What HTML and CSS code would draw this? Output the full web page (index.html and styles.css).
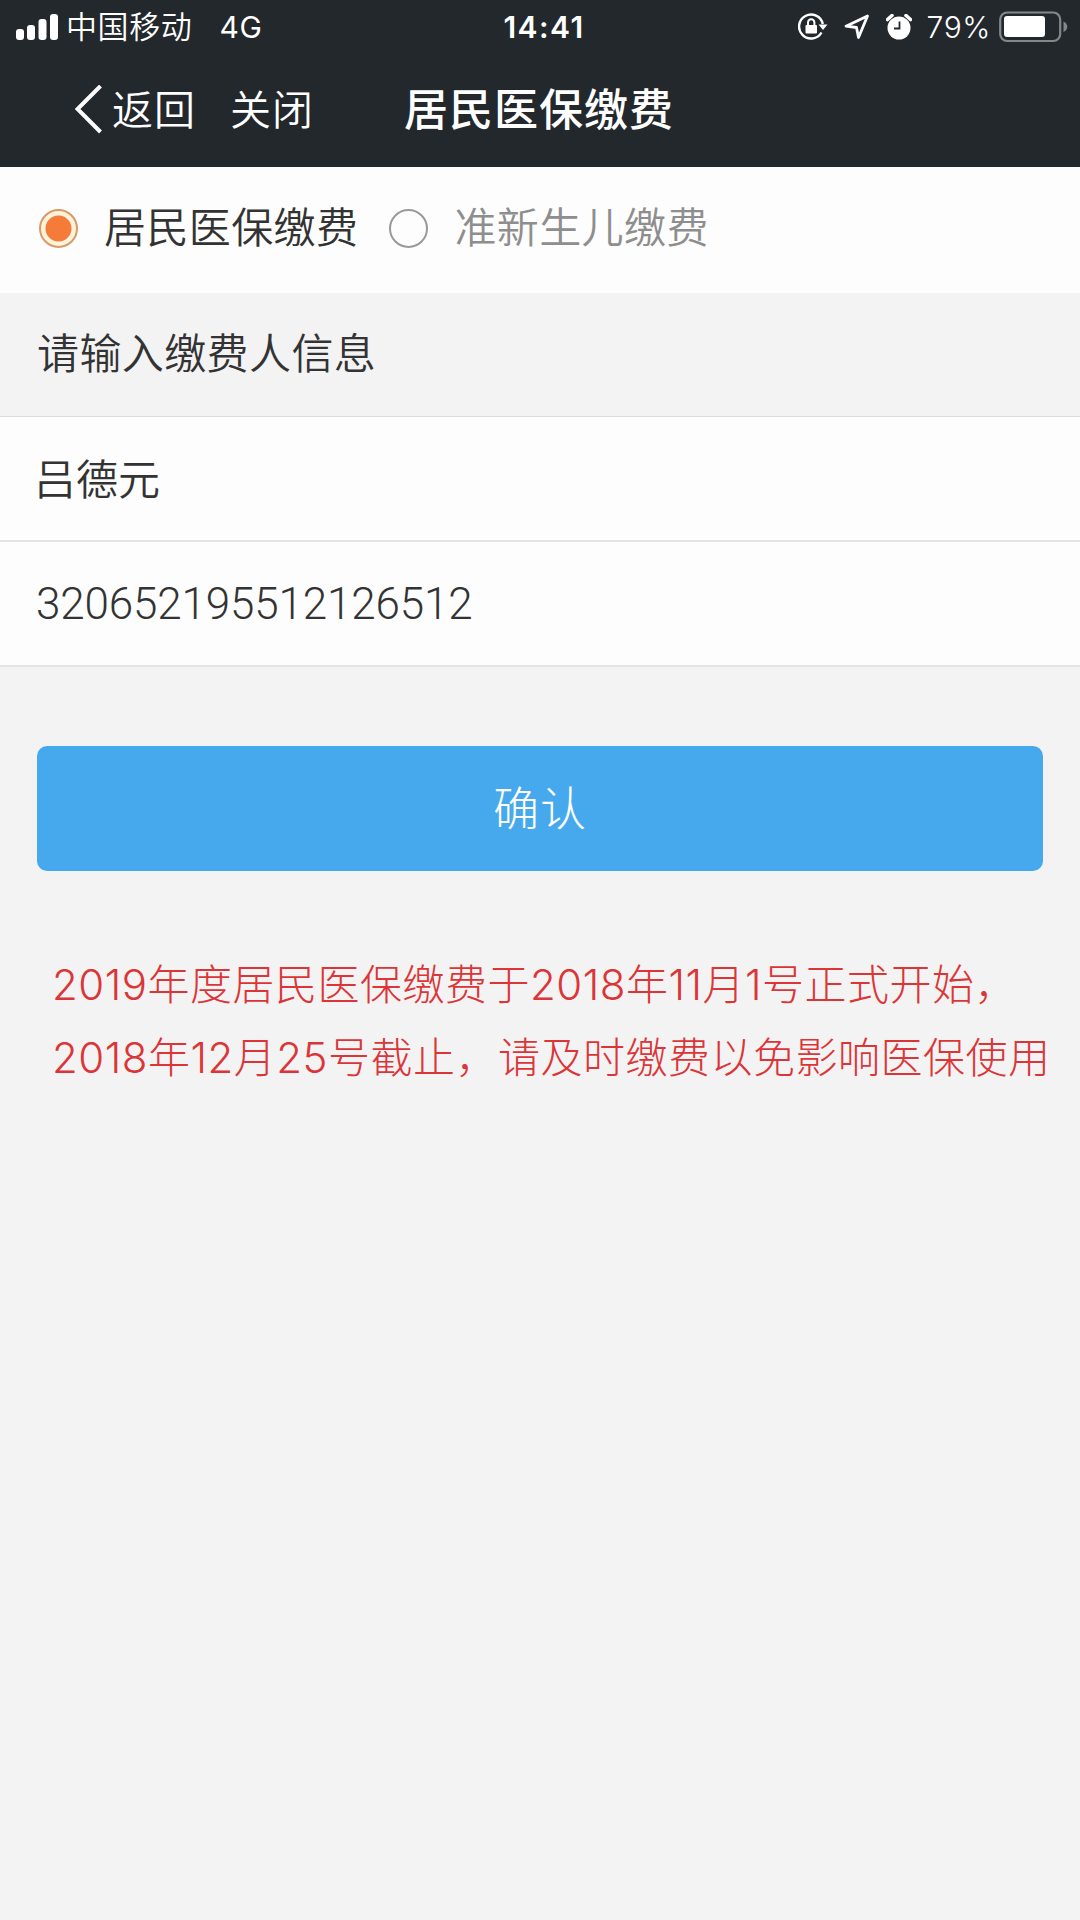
FILE: index.html
```
<!DOCTYPE html>
<html lang="zh-CN">
<head>
  <meta charset="UTF-8">
  <meta name="viewport" content="width=device-width, initial-scale=1.0">
  <title>居民医保缴费</title>
  <link rel="stylesheet" href="styles.css">
</head>
<body>
  <header class="header">
    <div class="status-bar">
      <div class="status-left">
        <svg class="signal" width="42" height="26" viewBox="0 0 42 26" fill="#fff">
          <rect x="0" y="15" width="8" height="11" rx="3"/>
          <rect x="11" y="11" width="8" height="15" rx="3"/>
          <rect x="22.500" y="5" width="8" height="21" rx="3"/>
          <rect x="34" y="0" width="8" height="26" rx="3"/>
        </svg>
        <span class="carrier">中国移动</span>
        <span class="network">4G</span>
      </div>
      <div class="clock">14:41</div>
      <div class="status-right">
        <svg class="lock" width="30" height="28" viewBox="0 0 30 28">
          <path d="M23.500 19.500A12 12 0 1 1 24.800 11" fill="none" stroke="#fff" stroke-width="2.400"/>
          <path d="M20.500 11.500h9L25 17z" fill="#fff"/>
          <rect x="7.500" y="12" width="11.500" height="8.500" rx="1" fill="#fff"/>
          <path d="M10 12V9.500a3.200 3.200 0 0 1 6.400 0V12" fill="none" stroke="#fff" stroke-width="2"/>
        </svg>
        <svg class="location" width="26" height="26" viewBox="0 0 26 26">
          <path d="M23.500 2L2 12.200l10.500 1.300L14.500 23.500z" fill="none" stroke="#fff" stroke-width="2.800" stroke-linejoin="round"/>
        </svg>
        <svg class="alarm" width="26" height="26" viewBox="0 0 26 26">
          <circle cx="13" cy="14" r="11.500" fill="#fff"/>
          <path d="M1.500 5.500L6 1.500M24.500 5.500L20 1.500" stroke="#fff" stroke-width="3.600" stroke-linecap="round"/>
          <path d="M13.500 7.500v7H8" fill="none" stroke="#23282c" stroke-width="1.800"/>
        </svg>
        <span class="percent">79%</span>
        <svg class="battery" width="69" height="32" viewBox="0 0 69 32">
          <rect x="1.200" y="1.500" width="60" height="28.500" rx="7" fill="none" stroke="#84888b" stroke-width="2.200"/>
          <rect x="5" y="5" width="41" height="21" rx="3" fill="#fff"/>
          <path d="M64.500 10.500c5 2 5 8.500 0 10.500z" fill="#84888b"/>
        </svg>
      </div>
    </div>
    <nav class="nav-bar">
      <a class="back">
        <svg width="28" height="50" viewBox="0 0 28 50">
          <path d="M25.500 1L2.500 24l23 23" fill="none" stroke="#fff" stroke-width="4"/>
        </svg>
        返回
      </a>
      <a class="close">关闭</a>
      <h1 class="title">居民医保缴费</h1>
    </nav>
  </header>

  <main>
    <div class="types">
      <label class="type active">
        <input type="radio" name="type" checked>
        居民医保缴费
      </label>
      <label class="type">
        <input type="radio" name="type">
        准新生儿缴费
      </label>
    </div>

    <h2 class="section-title">请输入缴费人信息</h2>

    <form class="form">
      <input class="field" type="text" value="吕德元">
      <input class="field id-number" type="text" value="320652195512126512">
      <button class="confirm" type="button">确认</button>
    </form>

    <p class="notice">2019年度居民医保缴费于2018年11月1号正式开始，<br>2018年12月25号截止，请及时缴费以免影响医保使用</p>
  </main>
</body>
</html>
```
FILE: styles.css
```
* {
  box-sizing: border-box;
}
body {
  margin: 0;
  min-height: 100vh;
  background-color: #f3f3f3;
  font-family: Inter, "Noto Sans CJK SC", sans-serif;
  font-weight: 350;
  color: #333;
  overflow: hidden;
}
.header {
  height: 167px;
  background-color: #23282c;
  color: #fff;
}
.status-bar {
  display: grid;
  grid-template-columns: 1fr auto 1fr;
  align-items: center;
  height: 54px;
  padding: 0 12px 0 16px;
  font-size: 30px;
  line-height: 54px;
}
.status-left, .status-right {
  display: flex;
  align-items: center;
}
.status-right {
  justify-content: flex-end;
}
.carrier {
  margin-left: 8px;
  font-size: 31px;
  letter-spacing: 0.6px;
}
.network {
  margin-left: 27px;
  font-weight: 400;
  letter-spacing: 0.6px;
}
.clock {
  padding-left: 4px;
  font-weight: 600;
  letter-spacing: 1.4px;
}
.location {
  margin-left: 16px;
}
.alarm {
  margin-left: 16px;
}
.percent {
  margin-left: 15px;
  letter-spacing: 0.6px;
}
.battery {
  margin-left: 8px;
}
.nav-bar {
  display: flex;
  align-items: center;
  height: 112px;
  padding-left: 75px;
  font-size: 41px;
  line-height: 50px;
  letter-spacing: 1px;
}
.back {
  display: flex;
  align-items: center;
  gap: 9px;
}
.close {
  margin-left: 34px;
}
.title {
  margin: 0 0 0 90px;
  font-size: 44px;
  font-weight: 500;
  letter-spacing: 1px;
}
.types {
  display: flex;
  align-items: center;
  gap: 31px;
  height: 126px;
  padding: 0 0 4px 39px;
  background-color: #fdfdfd;
}
.type {
  display: flex;
  align-items: center;
  height: 44px;
  font-size: 42px;
  line-height: 42px;
  letter-spacing: 0.4px;
  color: #8e8e8e;
}
.type input {
  appearance: none;
  width: 39px;
  height: 39px;
  margin: 0 26px 0 0;
  border: 2.5px solid #999;
  border-radius: 50%;
}
.type.active {
  color: #333;
}
.type.active input {
  border-color: #d99a68;
  background: radial-gradient(circle, #f47c38 12.5px, #fff3dc 13.5px);
}
.section-title {
  height: 123px;
  margin: 0;
  padding-left: 37px;
  font-size: 42px;
  font-weight: 350;
  line-height: 121px;
  letter-spacing: 0.4px;
}
.form {
  display: flex;
  flex-direction: column;
  border-top: 1px solid #dcdcdc;
}
.field {
  width: 100%;
  height: 125px;
  padding: 0 34px 5px;
  border: none;
  border-bottom: 2px solid #e4e4e4;
  background-color: #fdfdfd;
  color: #333;
  font: 350 42px "Noto Sans CJK SC", sans-serif;
}
.id-number {
  padding: 1px 36px 0;
  font: 300 44px Roboto, sans-serif;
  letter-spacing: -0.15px;
}
.confirm {
  height: 125px;
  margin: 79px 37px 0;
  padding: 0 0 7px;
  border: none;
  border-radius: 10px;
  background-color: #47a9ed;
  color: #fff;
  font: 300 46px "Noto Sans CJK SC", sans-serif;
  letter-spacing: 1px;
}
.notice {
  margin: 77px 0 0 52px;
  font-size: 42px;
  font-weight: 300;
  line-height: 73px;
  letter-spacing: 0.5px;
  white-space: nowrap;
  color: #dc3538;
}
```
